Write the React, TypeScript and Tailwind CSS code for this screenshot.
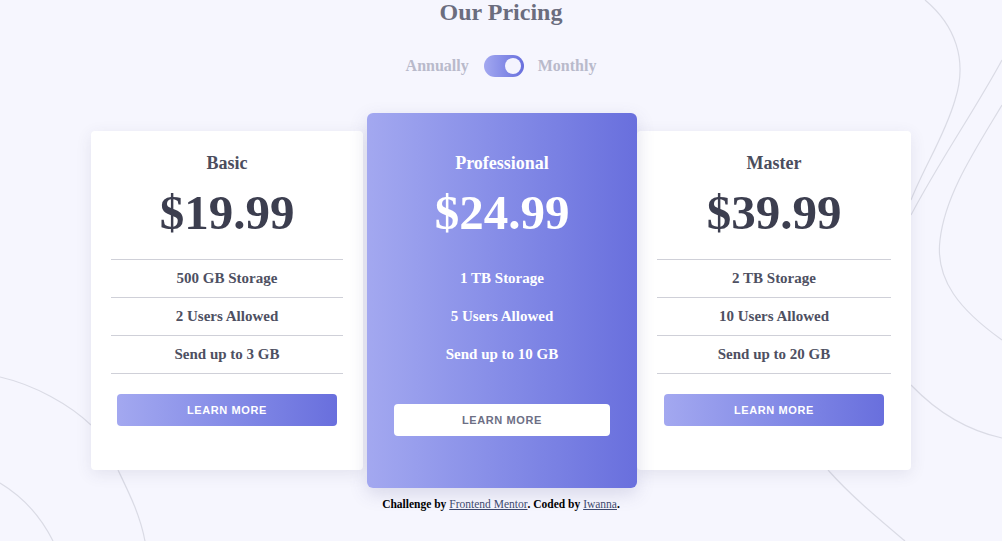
const plans = [
  { name: 'Basic', price: '$19.99', features: ['500 GB Storage', '2 Users Allowed', 'Send up to 3 GB'], featured: false, width: 'w-[272px] mr-[4px]' },
  { name: 'Professional', price: '$24.99', features: ['1 TB Storage', '5 Users Allowed', 'Send up to 10 GB'], featured: true, width: 'w-[270px]' },
  { name: 'Master', price: '$39.99', features: ['2 TB Storage', '10 Users Allowed', 'Send up to 20 GB'], featured: false, width: 'w-[274px]' },
];

function Background() {
  return (
    <svg
      className="absolute inset-0 pointer-events-none"
      width="1002"
      height="541"
      viewBox="0 0 1002 541"
      fill="none"
      stroke="#dadbe5"
      strokeWidth="1.2"
    >
      <path d="M925,0 C955,25 968,60 955,100 C945,135 925,165 911,200" />
      <path d="M1002,60 C975,110 940,160 911,215" />
      <path d="M1002,105 C975,150 945,195 940,240 C935,280 960,310 1002,340" />
      <path d="M911,385 C935,410 965,430 1002,438" />
      <path d="M828,470 C850,495 880,520 905,541" />
      <path d="M0,377 C35,385 70,405 91,425" />
      <path d="M118,470 C130,495 140,515 145,541" />
      <path d="M0,483 C20,495 40,515 53,541" />
    </svg>
  );
}

function PlanCard({ plan }: { plan: (typeof plans)[number] }) {
  const featured = plan.featured;
  return (
    <div
      className={`${plan.width} flex flex-col items-center shrink-0 ${
        featured
          ? 'relative z-10 rounded-md bg-linear-to-r from-[#a3a8f0] to-[#696fdd] pt-[40px] pb-[52px] text-white shadow-[0_6px_18px_rgba(80,80,140,0.18)]'
          : 'rounded bg-white pt-[22px] pb-[44px] shadow-[0_4px_16px_rgba(60,60,100,0.1)]'
      }`}
    >
      <h2 className={`text-[18px] leading-[20px] font-bold ${featured ? 'text-white' : 'text-[#4b4d5d]'}`}>{plan.name}</h2>
      <div className={`mt-[12px] text-[49px] leading-[56px] font-bold ${featured ? 'text-white' : 'text-[#3c3e4f]'}`}>
        {plan.price}
      </div>
      <ul className="mt-[18px] w-full px-5">
        {plan.features.map((f, i) => (
          <li
            key={f}
            className={`h-[38px] flex items-center justify-center border-t text-[15px] font-bold ${
              featured ? 'border-transparent text-white' : 'border-[#cfd0d8] text-[#4e5062]'
            } ${i === plan.features.length - 1 ? (featured ? 'border-b border-b-transparent h-[39px]' : 'border-b border-b-[#cfd0d8] h-[39px]') : ''}`}
          >
            {f}
          </li>
        ))}
      </ul>
      <button
        className={`h-[32px] rounded font-['Liberation_Sans',Arial,sans-serif] text-[11px] font-bold tracking-[0.6px] ${
          featured
            ? 'mt-[30px] w-[216px] bg-white text-[#6d6f85]'
            : 'mt-[20px] w-[220px] bg-linear-to-r from-[#a3a8f0] to-[#696fdd] text-white'
        }`}
      >
        LEARN MORE
      </button>
    </div>
  );
}

export default function App() {
  return (
    <div className="min-h-screen bg-white font-['Liberation_Serif','Times_New_Roman',serif]">
      <div className="relative h-[541px] overflow-hidden bg-[#f6f6fe]">
        <Background />
        <div className="relative flex flex-col items-center">
          <h1 className="text-[24px] leading-[24px] font-bold text-[#6b6d7e]">Our Pricing</h1>

          <div className="mt-[30px] flex items-center">
            <span className="text-[16px] font-bold text-[#b9bacb]">Annually</span>
            <div className="ml-[15px] mr-[14px] h-[22px] w-[40px] rounded-full bg-linear-to-r from-[#a3a8f0] to-[#696fdd] flex items-center justify-end pr-[3px]">
              <div className="h-[16px] w-[16px] rounded-full bg-[#f4f4fe]" />
            </div>
            <span className="text-[16px] font-bold text-[#b9bacb]">Monthly</span>
          </div>

          <div className="mt-[35px] flex items-center">
            {plans.map((p) => (
              <PlanCard key={p.name} plan={p} />
            ))}
          </div>

          <p className="mt-[8px] text-[11.5px] leading-[16px] font-bold text-black">
            Challenge by{' '}
            <a href="#" className="font-normal text-[#3e4a6e] underline">
              Frontend Mentor
            </a>
            . Coded by{' '}
            <a href="#" className="font-normal text-[#3e4a6e] underline">
              Iwanna
            </a>
            .
          </p>
        </div>
      </div>
    </div>
  );
}
